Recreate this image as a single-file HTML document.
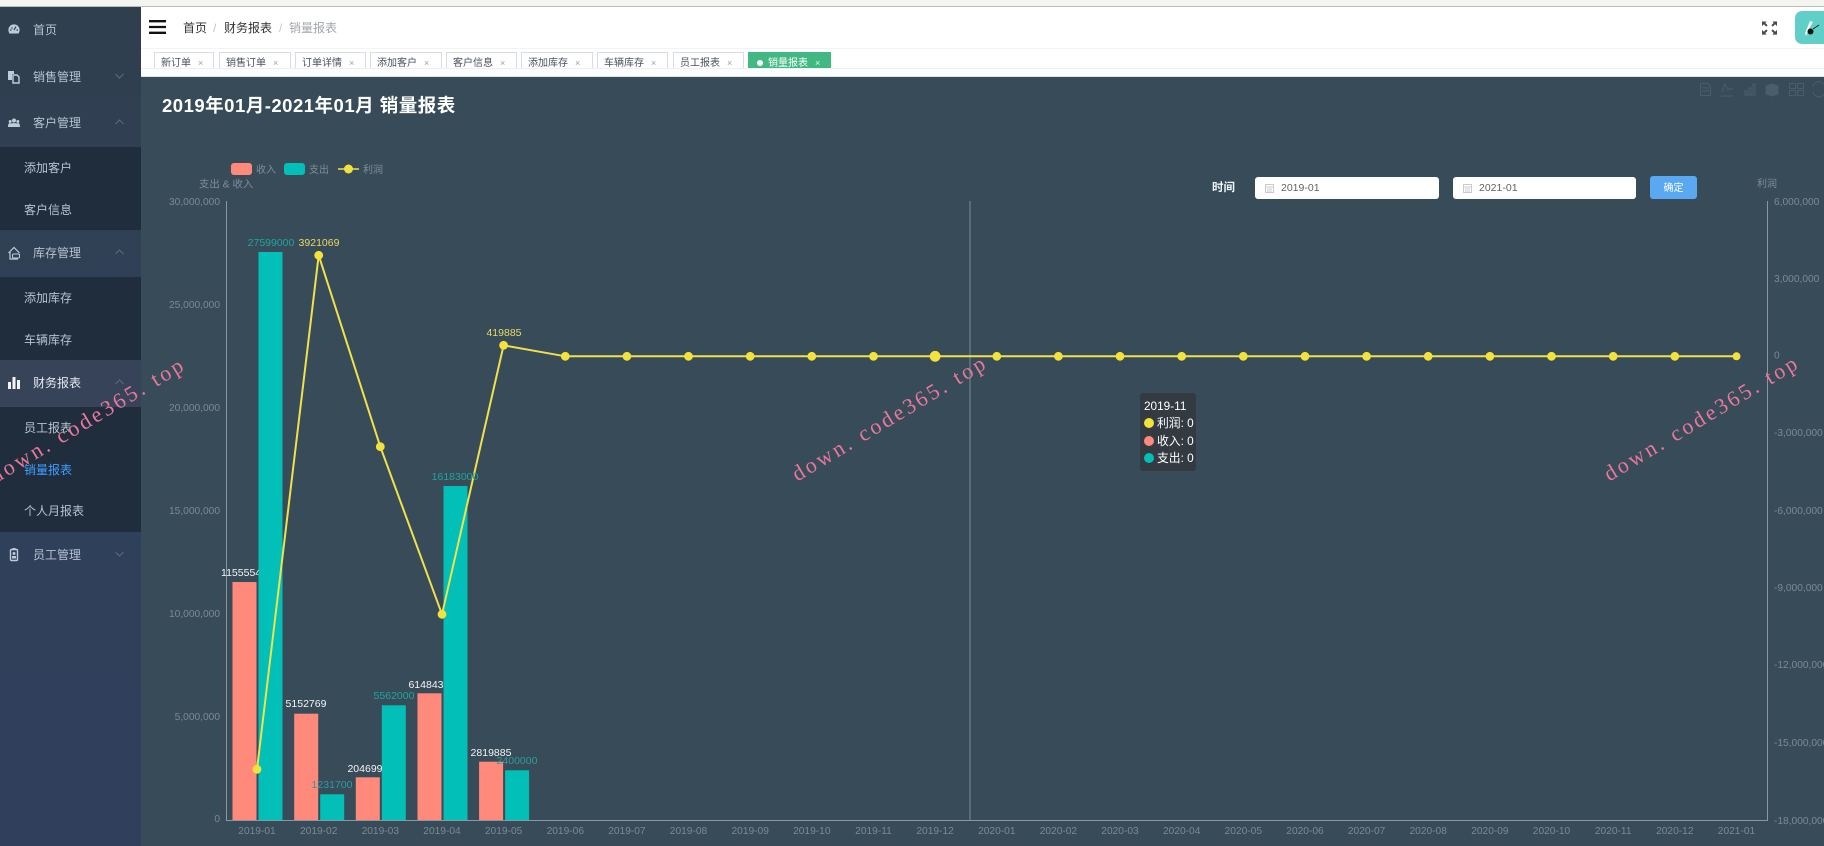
<!DOCTYPE html>
<html lang="zh-CN">
<head>
<meta charset="utf-8">
<title>销量报表</title>
<style>
html,body{margin:0;padding:0;width:1824px;height:846px;overflow:hidden;background:#fff;font-family:"Liberation Sans","Noto Sans CJK SC",sans-serif}
.abs{position:absolute}
#top{left:0;top:0;width:1824px;height:6px;background:#f4f5f1;border-bottom:1px solid #bcbdb9}
#side{left:0;top:7px;width:141px;height:839px;background:linear-gradient(180deg,#303f4e 0%,#2f405a 50%,#303f5c 100%)}
.row{position:absolute;left:0;width:141px;height:47px;color:#b7c3d0;font-size:12px;line-height:47px}
.row span{position:absolute;left:33px;top:0}
.row svg{position:absolute;left:8px;top:16px}
.row .ch{position:absolute;left:115px;top:19px}
.sub{position:absolute;left:0;width:141px;background:#1f2d3d}
.si{position:absolute;left:24px;font-size:12px;line-height:18px;color:#b7c3d0;white-space:nowrap}
#head{left:141px;top:7px;width:1683px;height:41px;background:#fff;border-bottom:1px solid #f3f3f3}
#tabbar{left:141px;top:49px;width:1683px;height:27px;background:#fff;border-bottom:1px solid #e6e9ec;overflow:hidden}
.tab{position:absolute;top:3px;height:20px;border:1px solid #d8dce5;box-sizing:border-box;background:#fff;color:#495060;font-size:10px;line-height:21px;white-space:nowrap;padding-left:6px}
.tab i{font-style:normal;color:#9aa0a8;font-size:9px;margin-left:7px}
.tab.on{background:#42b983;border-color:#42b983;color:#fff;padding-left:8px}
.tab.on i{color:#e8f5ef}
#tabmask{left:141px;top:68px;width:1683px;height:9px;background:#fcfdfd;border-top:1px solid #eef0f2;border-bottom:1px solid #dfe3e6;box-sizing:border-box}
#content{left:141px;top:77px;width:1683px;height:769px;background:#374b58}
.bc{position:absolute;top:18px;font-size:12px;line-height:20px;white-space:nowrap}
h1{position:absolute;left:162px;top:93px;margin:0;font-size:18.5px;letter-spacing:.5px;line-height:25px;font-weight:700;color:#fff;white-space:nowrap}
.inp{position:absolute;top:177px;height:22px;background:#fff;border-radius:3px;color:#606266;font-size:10.5px;line-height:23px;box-sizing:border-box;padding-left:26px}
.inp svg{position:absolute;left:10px;top:7px}
#btn{left:1650px;top:176px;width:47px;height:23px;background:#5aa8f2;border-radius:3px;color:#fff;font-size:10px;line-height:25px;text-align:center}
#lbl{left:1212px;top:179px;font-size:11.5px;font-weight:700;color:#f1f5f7;line-height:18px}
#tip{left:1140px;top:393px;width:56px;height:78px;background:#333a42;border-radius:3px;color:#fff;font-size:11.8px}
#tip div{position:absolute;left:4px;line-height:17px;white-space:nowrap}
#tip b{display:inline-block;width:10px;height:10px;border-radius:50%;margin-right:3px;vertical-align:-1px}
.wm{position:absolute;font-family:"Liberation Serif",serif;font-size:22px;color:#e9789c;letter-spacing:2.8px;white-space:nowrap;transform:rotate(-31deg);transform-origin:0 100%;line-height:24px}
svg text{font-family:"Liberation Sans","Noto Sans CJK SC",sans-serif}
</style>
</head>
<body>
<div id="top" class="abs"></div>

<div id="side" class="abs"></div>
<div class="row" style="top:7px"><svg width="12" height="14" viewBox="0 0 12 14"><circle cx="6" cy="7" r="5.6" fill="#bfcbd9"/><path d="M6 7 8 3.5M2 7h1.5M8.5 7H10M3.5 4.5l1 1" stroke="#303f4e" stroke-width="1.2"/><rect x="2" y="10.5" width="8" height="2" fill="#303f4e"/></svg><span>首页</span></div>
<div class="row" style="top:54px"><svg width="12" height="14" viewBox="0 0 12 14"><path d="M0 1h6v3H4v6H0z" fill="#bfcbd9"/><path d="M5 5h4l2 2v6H5z" fill="none" stroke="#bfcbd9" stroke-width="1.4"/></svg><span>销售管理</span><svg class="ch" width="9" height="6" viewBox="0 0 9 6"><path d="M.5 1 4.500 5 8.500 1" fill="none" stroke="#5c6c7d"/></svg></div>
<div class="row" style="top:100px"><svg width="12" height="14" viewBox="0 0 12 14"><circle cx="6" cy="4.500" r="2" fill="#bfcbd9"/><circle cx="2.200" cy="5.500" r="1.500" fill="#bfcbd9"/><circle cx="9.800" cy="5.500" r="1.500" fill="#bfcbd9"/><path d="M0 11c0-3 1-4 2-4l1 .5C4 7 8 7 9 7.500L10 7c1 0 2 1 2 4z" fill="#bfcbd9"/></svg><span>客户管理</span><svg class="ch" width="9" height="6" viewBox="0 0 9 6"><path d="M.5 5 4.500 1 8.500 5" fill="none" stroke="#5c6c7d"/></svg></div>
<div class="sub" style="top:147px;height:83px"></div>
<div class="si" style="top:159px">添加客户</div>
<div class="si" style="top:201px">客户信息</div>
<div class="row" style="top:230px"><svg width="12" height="14" viewBox="0 0 12 14"><path d="M.5 7 6 1.500 11.500 7M2 6v7h8" fill="none" stroke="#bfcbd9" stroke-width="1.200"/><rect x="4.500" y="8" width="7" height="4" rx="1" fill="none" stroke="#bfcbd9"/></svg><span>库存管理</span><svg class="ch" width="9" height="6" viewBox="0 0 9 6"><path d="M.5 5 4.500 1 8.500 5" fill="none" stroke="#5c6c7d"/></svg></div>
<div class="sub" style="top:277px;height:83px"></div>
<div class="si" style="top:289px">添加库存</div>
<div class="si" style="top:331px">车辆库存</div>
<div class="abs" style="left:0;top:360px;width:141px;height:47px;background:#364359"></div>
<div class="row" style="top:360px;color:#e6ebf1"><svg width="12" height="14" viewBox="0 0 12 14"><rect x="0" y="6" width="3" height="7" fill="#f2f4f6"/><rect x="4.500" y="1" width="3" height="12" fill="#f2f4f6"/><rect x="9" y="4" width="3" height="9" fill="#f2f4f6"/></svg><span>财务报表</span><svg class="ch" width="9" height="6" viewBox="0 0 9 6"><path d="M.5 5 4.500 1 8.500 5" fill="none" stroke="#5c6c7d"/></svg></div>
<div class="sub" style="top:407px;height:125px"></div>
<div class="si" style="top:419px">员工报表</div>
<div class="si" style="top:461px;color:#409eff">销量报表</div>
<div class="si" style="top:502px">个人月报表</div>
<div class="row" style="top:532px"><svg width="12" height="14" viewBox="0 0 12 14"><rect x="2.500" y="1.500" width="7" height="11" rx="1" fill="none" stroke="#bfcbd9" stroke-width="1.400"/><rect x="4.500" y="0" width="3" height="2" fill="#bfcbd9"/><circle cx="6" cy="5.500" r="1.500" fill="#bfcbd9"/><rect x="4" y="8" width="4" height="2.500" fill="#bfcbd9"/></svg><span>员工管理</span><svg class="ch" width="9" height="6" viewBox="0 0 9 6"><path d="M.5 1 4.500 5 8.500 1" fill="none" stroke="#5c6c7d"/></svg></div>

<div id="head" class="abs"></div>
<svg class="abs" style="left:149px;top:20px" width="17" height="14" viewBox="0 0 17 14"><path d="M0 1.200h17M0 7h17M0 12.800h17" stroke="#111" stroke-width="2.300"/></svg>
<div class="bc" style="left:183px;color:#303133">首页</div>
<div class="bc" style="left:213px;color:#c0c4cc">/</div>
<div class="bc" style="left:224px;color:#303133">财务报表</div>
<div class="bc" style="left:279px;color:#c0c4cc">/</div>
<div class="bc" style="left:289px;color:#a3a6ab">销量报表</div>
<svg class="abs" style="left:1762px;top:21px" width="15" height="14" viewBox="0 0 16 14"><path d="M0 0h5L3.500 1.500 6 4 4.500 5.500 2 3 0 5zM16 0h-5l1.500 1.500L10 4l1.500 1.500L14 3l2 2zM0 14h5l-1.500-1.500L6 10 4.500 8.500 2 11l-2-2zM16 14h-5l1.500-1.500L10 10l1.500-1.500L14 11l2-2z" fill="#4a4a4a"/></svg>
<svg class="abs" style="left:1795px;top:11px" width="29" height="33" viewBox="0 0 29 33"><path d="M8 0H29V33H8Q0 33 0 25V8Q0 0 8 0z" fill="#5fcfc8"/><path d="M15 10 18 11 14 18 11 25 10 22z" fill="#f4fbfa"/><circle cx="15.500" cy="20.500" r="3" fill="#111"/><path d="M18 18 24 14" stroke="#222" stroke-width="1"/></svg>

<div id="tabbar" class="abs"></div>
<div class="tab" style="left:154px;top:52px;width:60px">新订单<i>×</i></div>
<div class="tab" style="left:219px;top:52px;width:72px">销售订单<i>×</i></div>
<div class="tab" style="left:295px;top:52px;width:71px">订单详情<i>×</i></div>
<div class="tab" style="left:370px;top:52px;width:72px">添加客户<i>×</i></div>
<div class="tab" style="left:446px;top:52px;width:71px">客户信息<i>×</i></div>
<div class="tab" style="left:521px;top:52px;width:72px">添加库存<i>×</i></div>
<div class="tab" style="left:597px;top:52px;width:71px">车辆库存<i>×</i></div>
<div class="tab" style="left:673px;top:52px;width:71px">员工报表<i>×</i></div>
<div class="tab on" style="left:748px;top:52px;width:83px"><span style="display:inline-block;width:6px;height:6px;border-radius:50%;background:#fff;margin-right:5px"></span>销量报表<i>×</i></div>
<div id="tabmask" class="abs"></div>

<div id="content" class="abs"></div>
<h1>2019年01月-2021年01月 销量报表</h1>

<svg class="abs" style="left:0;top:0" width="1824" height="846" viewBox="0 0 1824 846">
  <!-- toolbox -->
  <g fill="none" stroke="#4a5d6a" stroke-width="1">
    <path d="M1700.500 83.500h7l3 3v9h-10zM1702 88h7M1702 91h7"/>
    <path d="M1721 96h12M1722 92l3-8 3 6 2-2 3 2"/>
    <path d="M1744 95h12M1745 95v-4h2v4M1749 95v-7h2v7M1753 95V84h2v11"/>
    <path d="M1766 86l6-2 6 2v8l-6 2-6-2z" fill="#4a5d6a"/>
    <path d="M1789.500 83.500h6v5h-6zM1797.500 83.500h6v5h-6zM1789.500 90.500h6v5h-6zM1797.500 90.500h6v5h-6z"/>
    <path d="M1824 84.500a6 6 0 0 0-11 2M1813 92a6 6 0 0 0 11 2"/>
  </g>

  <!-- axes -->
  <path d="M226.500 201V820.500H1767.500V201" fill="none" stroke="#8798a3" stroke-width="1"/>
  <path d="M970 201V820" stroke="#6f818e" stroke-width="1.200"/>

  <!-- legend -->
  <rect x="231" y="163" width="21" height="12" rx="3" fill="#ff8a7c"/>
  <rect x="284" y="163" width="21" height="12" rx="3" fill="#02bfb7"/>
  <path d="M338 169h21" stroke="#f0e040" stroke-width="1.400"/>
  <circle cx="348.500" cy="169" r="4.500" fill="#f4e23c"/>
  <g font-size="10" fill="#7f8e99">
    <text x="256" y="173">收入</text>
    <text x="309" y="173">支出</text>
    <text x="363" y="173">利润</text>
    <text x="199" y="187.500" font-size="10.400">支出 &amp; 收入</text>
    <text x="1757" y="187">利润</text>
  </g>

  <!-- y labels -->
  <g font-size="10.200" fill="#7b8a95" text-anchor="end">
    <text x="220" y="205">30,000,000</text>
    <text x="220" y="308">25,000,000</text>
    <text x="220" y="411">20,000,000</text>
    <text x="220" y="514">15,000,000</text>
    <text x="220" y="617">10,000,000</text>
    <text x="220" y="720">5,000,000</text>
    <text x="220" y="822">0</text>
  </g>
  <g font-size="10.200" fill="#7b8a95">
    <text x="1774" y="205">6,000,000</text>
    <text x="1774" y="282">3,000,000</text>
    <text x="1774" y="358.500">0</text>
    <text x="1774" y="436">-3,000,000</text>
    <text x="1774" y="514">-6,000,000</text>
    <text x="1774" y="591">-9,000,000</text>
    <text x="1774" y="668">-12,000,000</text>
    <text x="1774" y="746">-15,000,000</text>
    <text x="1774" y="824">-18,000,000</text>
  </g>

  <!-- x labels -->
  <g font-size="10.200" fill="#7b8a95" text-anchor="middle">
    <text x="257" y="834">2019-01</text><text x="318.700" y="834">2019-02</text><text x="380.300" y="834">2019-03</text><text x="442" y="834">2019-04</text><text x="503.600" y="834">2019-05</text><text x="565.300" y="834">2019-06</text><text x="626.900" y="834">2019-07</text><text x="688.500" y="834">2019-08</text><text x="750.200" y="834">2019-09</text><text x="811.800" y="834">2019-10</text><text x="873.500" y="834">2019-11</text><text x="935.100" y="834">2019-12</text><text x="996.800" y="834">2020-01</text><text x="1058.400" y="834">2020-02</text><text x="1120" y="834">2020-03</text><text x="1181.700" y="834">2020-04</text><text x="1243.300" y="834">2020-05</text><text x="1305" y="834">2020-06</text><text x="1366.600" y="834">2020-07</text><text x="1428.200" y="834">2020-08</text><text x="1489.900" y="834">2020-09</text><text x="1551.500" y="834">2020-10</text><text x="1613.200" y="834">2020-11</text><text x="1674.800" y="834">2020-12</text><text x="1736.500" y="834">2021-01</text>
  </g>

  <text x="244" y="576" font-size="10.500" fill="#f4f6f7" text-anchor="middle">11555544</text>

  <!-- bars -->
  <g fill="#ff8a7c">
    <rect x="232.500" y="582" width="24" height="238"/>
    <rect x="294.200" y="713.700" width="24" height="106.300"/>
    <rect x="355.800" y="777.300" width="24" height="42.700"/>
    <rect x="417.500" y="693.300" width="24" height="126.700"/>
    <rect x="479.100" y="761.700" width="24" height="58.300"/>
  </g>
  <g fill="#02bfb7">
    <rect x="258.500" y="252" width="24" height="568"/>
    <rect x="320.200" y="794.300" width="24" height="25.700"/>
    <rect x="381.800" y="705.300" width="24" height="114.700"/>
    <rect x="443.500" y="486" width="24" height="334"/>
    <rect x="505.100" y="770.300" width="24" height="49.700"/>
  </g>

  <!-- line -->
  <polyline points="257,769.300 318.700,255.300 380.300,446.700 442,614.300 503.600,345.300 565.300,356.300 1736.500,356.300" fill="none" stroke="#f0e24a" stroke-width="2"/>
  <g fill="#f4e23c">
    <circle cx="257" cy="769.300" r="4.400"/><circle cx="318.700" cy="255.300" r="4.400"/><circle cx="380.300" cy="446.700" r="4.400"/><circle cx="442" cy="614.300" r="4.400"/><circle cx="503.600" cy="345.300" r="4.400"/><circle cx="565.300" cy="356.300" r="4.400"/><circle cx="626.900" cy="356.300" r="4.400"/><circle cx="688.500" cy="356.300" r="4.400"/><circle cx="750.200" cy="356.300" r="4.400"/><circle cx="811.800" cy="356.300" r="4.400"/><circle cx="873.500" cy="356.300" r="4.400"/><circle cx="935.100" cy="356.300" r="5.400"/><circle cx="996.800" cy="356.300" r="4.400"/><circle cx="1058.400" cy="356.300" r="4.400"/><circle cx="1120" cy="356.300" r="4.400"/><circle cx="1181.700" cy="356.300" r="4.400"/><circle cx="1243.300" cy="356.300" r="4.400"/><circle cx="1305" cy="356.300" r="4.400"/><circle cx="1366.600" cy="356.300" r="4.400"/><circle cx="1428.200" cy="356.300" r="4.400"/><circle cx="1489.900" cy="356.300" r="4.400"/><circle cx="1551.500" cy="356.300" r="4.400"/><circle cx="1613.200" cy="356.300" r="4.400"/><circle cx="1674.800" cy="356.300" r="4.400"/><circle cx="1736.500" cy="356.300" r="4"/>
  </g>

  <!-- data labels -->
  <g font-size="10.500" text-anchor="middle">
    <text x="271" y="246" fill="#1fa5a2">27599000</text>
    <text x="319" y="246" fill="#e6dc66">3921069</text>
    <text x="504" y="336" fill="#e6dc66">419885</text>
    <text x="306" y="707" fill="#f4f6f7">5152769</text>
    <text x="332" y="788" fill="#2f9c9b">1231700</text>
    <text x="365" y="772" fill="#f4f6f7">204699</text>
    <text x="394" y="699" fill="#1fa5a2">5562000</text>
    <text x="426" y="688" fill="#f4f6f7">614843</text>
    <text x="455" y="480" fill="#1fa5a2">16183000</text>
    <text x="491" y="756" fill="#f4f6f7">2819885</text>
    <text x="517" y="764" fill="#2f9c9b">2400000</text>
  </g>
</svg>

<div id="lbl" class="abs">时间</div>
<div class="inp" style="left:1255px;width:184px"><svg width="9" height="9" viewBox="0 0 9 9"><path d="M.5.500h8v8h-8zM.5 3h8M2 5h5M2 7h5" fill="none" stroke="#c8ccd2"/></svg>2019-01</div>
<div class="inp" style="left:1453px;width:183px"><svg width="9" height="9" viewBox="0 0 9 9"><path d="M.5.500h8v8h-8zM.5 3h8M2 5h5M2 7h5" fill="none" stroke="#c8ccd2"/></svg>2021-01</div>
<div id="btn" class="abs">确定</div>

<div id="tip" class="abs">
  <div style="top:5px">2019-11</div>
  <div style="top:22px"><b style="background:#f4e23c"></b>利润: 0</div>
  <div style="top:40px"><b style="background:#ff8a7c"></b>收入: 0</div>
  <div style="top:57px"><b style="background:#02bfb7"></b>支出: 0</div>
</div>

<div class="wm" style="left:-2px;top:464px;">down. code365. top</div>
<div class="wm" style="left:800px;top:462px;">down. code365. top</div>
<div class="wm" style="left:1612px;top:462px;">down. code365. top</div>
</body>
</html>
